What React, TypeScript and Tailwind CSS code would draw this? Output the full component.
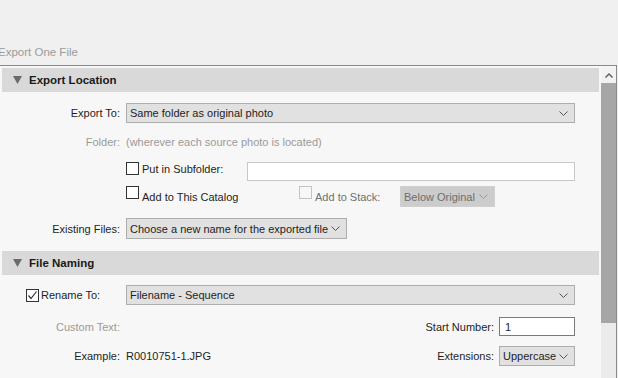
import React from 'react';

const Chevron = ({ color = '#555555' }: { color?: string }) => (
  <svg width="9" height="5" viewBox="0 0 9 5" className="shrink-0">
    <path d="M0.5 0.5 L4.5 4.5 L8.5 0.5" fill="none" stroke={color} strokeWidth="1" />
  </svg>
);

const Label = ({ children, dim }: { children: React.ReactNode; dim?: boolean }) => (
  <div className={`w-[120px] shrink-0 pt-[1px] text-right ${dim ? 'text-[#9a9a9a]' : 'text-[#1e1e1e]'}`}>{children}</div>
);

const Select = ({ children, className, disabled }: { children: React.ReactNode; className: string; disabled?: boolean }) => (
  <div
    className={`flex shrink-0 items-center justify-between border pl-[3px] pr-[6px] ${
      disabled ? 'border-[#d0d0d0] bg-[#cccccc] text-[#6d6d6d]' : 'border-[#adadad] bg-[#e1e1e1] text-[#1e1e1e]'
    } ${className}`}
  >
    <span className="whitespace-nowrap pt-[1px]">{children}</span>
    <Chevron color={disabled ? '#9a9a9a' : '#555555'} />
  </div>
);

const Checkbox = ({ checked, disabled }: { checked?: boolean; disabled?: boolean }) => (
  <div
    className={`flex h-[13px] w-[13px] shrink-0 items-center justify-center border ${
      disabled ? 'border-[#c4c4c4] bg-[#f7f7f7]' : 'border-[#333333] bg-white'
    }`}
  >
    {checked && (
      <svg width="11" height="11" viewBox="0 0 11 11">
        <path d="M1.5 5.5 L4 8.5 L9.5 1.5" fill="none" stroke="#333333" strokeWidth="1.2" />
      </svg>
    )}
  </div>
);

const SectionHeader = ({ title }: { title: string }) => (
  <div className="ml-[2px] flex h-[24px] w-[597px] items-center bg-[#d9d9d9]">
    <svg width="9" height="8" viewBox="0 0 9 8" className="ml-[11px]">
      <polygon points="0,0 9,0 4.5,8" fill="#6b6b6b" />
    </svg>
    <span className="ml-[7px] pt-[2px] text-[11.5px] font-bold text-[#1a1a1a]">{title}</span>
  </div>
);

export default function App() {
  return (
    <div
      className="flex h-[378px] w-[618px] flex-col overflow-hidden bg-[#f0f0f0] text-[11px] leading-none"
      style={{ fontFamily: '"Liberation Sans", Arial, sans-serif' }}
    >
      <div className="flex h-[65px] shrink-0 items-end pb-[7px]">
        <span className="ml-[-2px] text-[11.5px] text-[#9b9b9b]">Export One File</span>
      </div>

      <div className="flex w-[617px] flex-1 border-t border-r border-[#8a8a8a] bg-[#f7f7f7]">
        <div className="flex w-[601px] shrink-0 flex-col pt-[2px]">
          <SectionHeader title="Export Location" />

          <div className="mt-[11px] flex h-[20px] items-center">
            <Label>Export To:</Label>
            <Select className="ml-[6px] h-[20px] w-[449px]">Same folder as original photo</Select>
          </div>

          <div className="mt-[9px] flex h-[20px] items-center">
            <Label dim>Folder:</Label>
            <span className="ml-[6px] pt-[1px] text-[#9a9a9a]">(wherever each source photo is located)</span>
          </div>

          <div className="mt-[10px] flex h-[19px] items-start">
            <div className="flex w-[247px] shrink-0 items-center pl-[126px]">
              <Checkbox />
              <span className="ml-[3px] pt-[1px] text-[#1e1e1e]">Put in Subfolder:</span>
            </div>
            <div className="h-[19px] w-[328px] border border-[#c8c8c8] bg-white" />
          </div>

          <div className="mt-[5px] flex h-[21px] items-center">
            <div className="flex w-[299px] shrink-0 items-center self-stretch pl-[126px]">
              <div className="self-start">
                <Checkbox />
              </div>
              <span className="ml-[3px] pt-[1px] text-[#1e1e1e]">Add to This Catalog</span>
            </div>
            <div className="flex w-[101px] shrink-0 items-center self-stretch">
              <div className="self-start">
                <Checkbox disabled />
              </div>
              <span className="ml-[3px] pt-[1px] text-[#707070]">Add to Stack:</span>
            </div>
            <Select disabled className="h-[21px] w-[95px]">
              Below Original
            </Select>
          </div>

          <div className="mt-[11px] flex h-[21px] items-center">
            <Label>Existing Files:</Label>
            <Select className="ml-[6px] h-[21px] w-[221px]">Choose a new name for the exported file</Select>
          </div>

          <div className="mt-[12px]">
            <SectionHeader title="File Naming" />
          </div>

          <div className="mt-[10px] flex h-[20px] items-center">
            <div className="flex w-[120px] shrink-0 items-center pl-[26px]">
              <Checkbox checked />
              <span className="ml-[2px] pt-[1px] text-[#1e1e1e]">Rename To:</span>
            </div>
            <Select className="ml-[6px] h-[20px] w-[449px]">Filename - Sequence</Select>
          </div>

          <div className="mt-[12px] flex h-[19px] items-center">
            <Label dim>Custom Text:</Label>
            <span className="ml-auto mr-[5px] pt-[1px] text-[#1e1e1e]">Start Number:</span>
            <div className="mr-[26px] flex h-[19px] w-[76px] items-center border border-[#7a7a7a] bg-white pl-[5px] pt-[1px] text-[#1e1e1e]">
              1
            </div>
          </div>

          <div className="mt-[10px] flex h-[20px] items-center">
            <Label>Example:</Label>
            <span className="ml-[6px] pt-[1px] text-[#1e1e1e]">R0010751-1.JPG</span>
            <span className="ml-auto mr-[5px] pt-[1px] text-[#1e1e1e]">Extensions:</span>
            <Select className="mr-[26px] h-[20px] w-[76px]">Uppercase</Select>
          </div>
        </div>

        <div className="mt-[1px] flex w-[15px] shrink-0 flex-col bg-[#ebebeb]">
          <div className="flex h-[16px] items-center justify-center bg-[#f2f2f2]">
            <svg width="8" height="5" viewBox="0 0 8 5">
              <path d="M0.5 4.5 L4 1 L7.5 4.5" fill="none" stroke="#5a5a5a" strokeWidth="1.4" />
            </svg>
          </div>
          <div className="h-[240px] bg-[#a6a6a6]" />
        </div>
      </div>
    </div>
  );
}
